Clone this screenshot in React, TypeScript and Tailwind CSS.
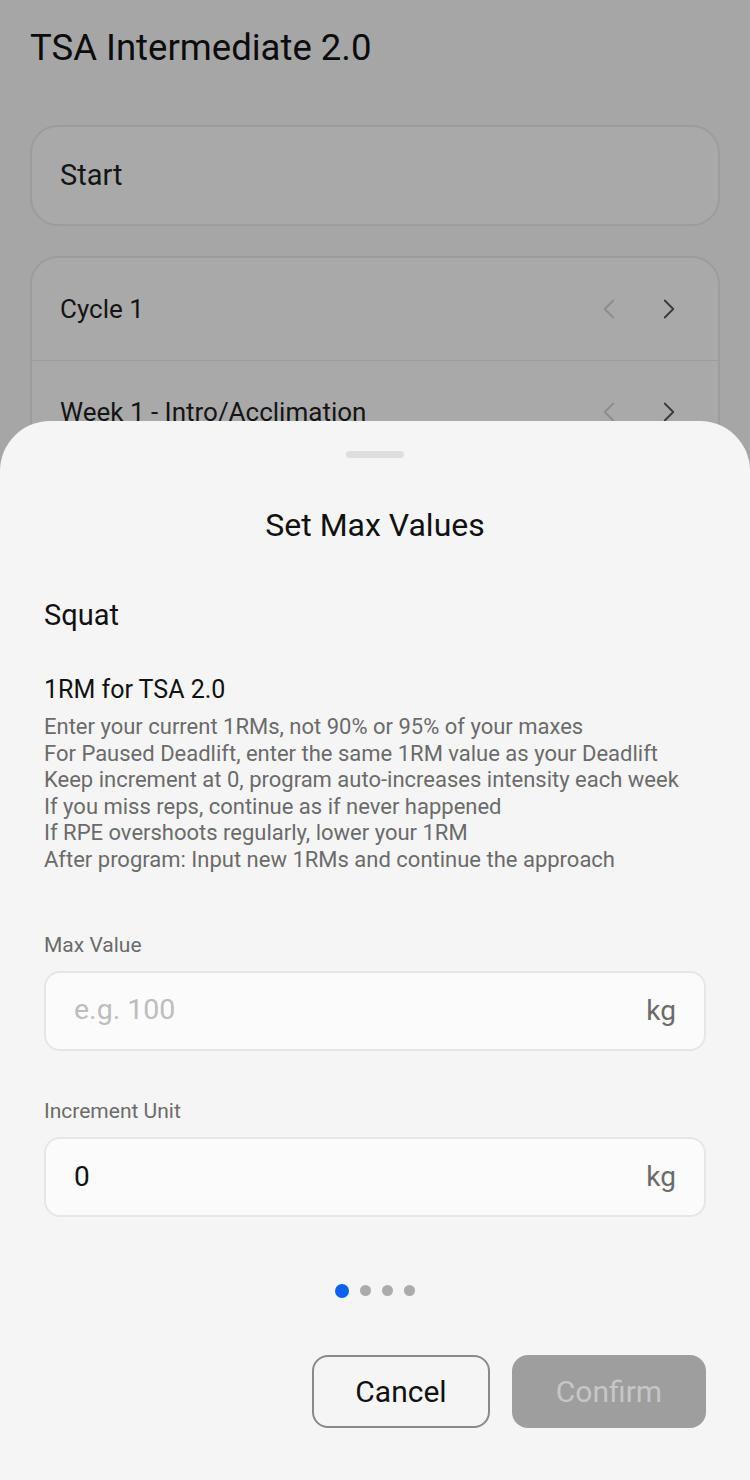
import { ChevronLeft, ChevronRight } from "lucide-react";

const tips = [
  "Enter your current 1RMs, not 90% or 95% of your maxes",
  "For Paused Deadlift, enter the same 1RM value as your Deadlift",
  "Keep increment at 0, program auto-increases intensity each week",
  "If you miss reps, continue as if never happened",
  "If RPE overshoots regularly, lower your 1RM",
  "After program: Input new 1RMs and continue the approach",
];

function StepperRow({ label, last }: { label: string; last?: boolean }) {
  return (
    <div
      className={`h-[103px] flex items-center justify-between pl-[28px] pr-[32px] ${
        last ? "" : "border-b border-[#9c9c9c]"
      }`}
    >
      <span className="text-[26px] text-[#151515]">{label}</span>
      <div className="flex items-center gap-[26px]">
        <ChevronLeft className="w-[34px] h-[34px] text-[#8c8c8c]" strokeWidth={1.3} />
        <ChevronRight className="w-[34px] h-[34px] text-[#3a3a3a]" strokeWidth={1.3} />
      </div>
    </div>
  );
}

function Field({ label, placeholder, value }: { label: string; placeholder?: string; value?: string }) {
  return (
    <div className="flex flex-col">
      <span className="text-[21px] text-[#6b6b6b] leading-none">{label}</span>
      <div className="mt-[15px] h-[80px] rounded-[16px] border-2 border-[#e6e6e6] bg-[#fbfbfb] flex items-center justify-between pl-[28px] pr-[28px]">
        {value ? (
          <span className="text-[28px] text-[#111]">{value}</span>
        ) : (
          <span className="text-[28.5px] text-[#bdbdbd]">{placeholder}</span>
        )}
        <span className="text-[28px] text-[#6b6b6b]">kg</span>
      </div>
    </div>
  );
}

export default function App() {
  return (
    <div
      className="relative w-[750px] h-[1480px] overflow-hidden bg-[#a6a6a6]"
      style={{ fontFamily: "Roboto, 'Noto Sans', sans-serif" }}
    >
      {/* Background page (dimmed) */}
      <div className="px-[30px] pt-[26px] flex flex-col">
        <h1 className="text-[36.5px] text-[#0c0c0c] leading-[44px]">TSA Intermediate 2.0</h1>
        <div className="mt-[55px] h-[101px] rounded-[28px] border-2 border-[#9c9c9c] bg-[#a9a9a9] flex items-center pl-[28px]">
          <span className="text-[29px] text-[#151515]">Start</span>
        </div>
        <div className="mt-[30px] rounded-[28px] border-2 border-[#9c9c9c] bg-[#a9a9a9]">
          <StepperRow label="Cycle 1" />
          <StepperRow label="Week 1 - Intro/Acclimation" />
          <StepperRow label="Day 1" last />
        </div>
      </div>

      {/* Bottom sheet */}
      <div className="absolute left-0 right-0 top-[421px] bottom-0 bg-[#f5f5f5] rounded-t-[50px] flex flex-col px-[44px]">
        <div className="mt-[30px] self-center w-[58px] h-[7px] rounded-full bg-[#dedede]" />
        <h2 className="mt-[47px] text-center text-[32px] text-[#111] leading-[40px]">Set Max Values</h2>
        <div className="mt-[50px] text-[29px] text-[#111] leading-[40px]">Squat</div>
        <div className="mt-[39px] text-[25px] text-[#111] leading-[32px]">1RM for TSA 2.0</div>
        <div className="mt-[8px] flex flex-col text-[22px] text-[#6b6b6b] leading-[26.6px]">
          {tips.map((t) => (
            <span key={t}>{t}</span>
          ))}
        </div>
        <div className="mt-[61px] flex flex-col gap-[50px]">
          <Field label="Max Value" placeholder="e.g. 100" />
          <Field label="Increment Unit" value="0" />
        </div>
        <div className="mt-[67px] flex items-center justify-center gap-[11px]">
          <span className="w-[14px] h-[14px] rounded-full bg-[#0a63f0]" />
          <span className="w-[11px] h-[11px] rounded-full bg-[#ababab]" />
          <span className="w-[11px] h-[11px] rounded-full bg-[#ababab]" />
          <span className="w-[11px] h-[11px] rounded-full bg-[#ababab]" />
        </div>
        <div className="mt-[57px] flex justify-end gap-[22px]">
          <button className="w-[178px] h-[73px] rounded-[16px] border-2 border-[#8a8a8a] text-[30px] text-[#111] bg-[#f5f5f5]">
            Cancel
          </button>
          <button className="w-[194px] h-[73px] rounded-[16px] bg-[#9e9e9e] text-[30px] text-[#c6c6c6]">
            Confirm
          </button>
        </div>
      </div>
    </div>
  );
}
